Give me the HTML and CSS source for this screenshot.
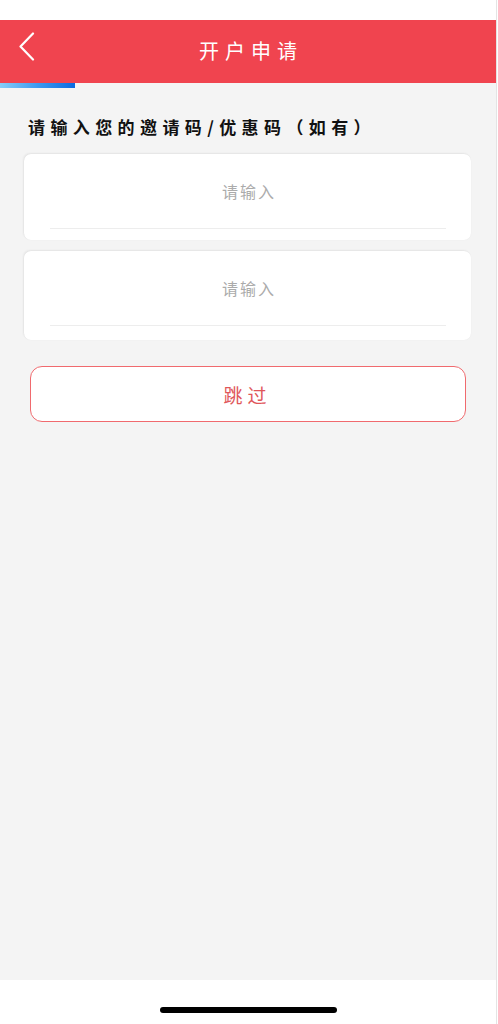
FILE: index.html
```html
<!DOCTYPE html>
<html lang="zh-CN">
<head>
<meta charset="utf-8">
<title>开户申请</title>
<link rel="stylesheet" href="styles.css">
</head>
<body>
<div class="page">
  <div class="status"></div>
  <header class="header">
    <a class="back" href="#" aria-label="返回">
      <svg width="17" height="29" viewBox="0 0 17 29"><path d="M15 1.5 L2.5 14.5 L15 27.5" fill="none" stroke="#fff" stroke-width="2.2" stroke-linecap="round" stroke-linejoin="round"/></svg>
    </a>
    <h1 class="title">开户申请</h1>
    <span></span>
  </header>
  <main class="content">
    <div class="progress"></div>
    <p class="label">请输入您的邀请码/优惠码（如有）</p>
    <div class="card">
      <div class="field">请输入</div>
    </div>
    <div class="card card-tall">
      <div class="field">请输入</div>
    </div>
    <button class="skip" type="button">跳过</button>
  </main>
  <footer class="footer"><span class="home"></span></footer>
</div>
</body>
</html>
```

FILE: styles.css
```css
* { box-sizing: border-box; }
html, body { margin: 0; padding: 0; }
body {
  width: 498px;
  height: 1024px;
  background: #ffffff;
  font-family: "Noto Sans CJK SC", "Noto Sans", "Liberation Sans", sans-serif;
  overflow: hidden;
}
.page {
  width: 497px;
  height: 1024px;
  display: flex;
  flex-direction: column;
  border-right: 1px solid #e4e4e4;
}
.status { height: 20px; background: #fff; flex: none; }
.header {
  height: 63px;
  flex: none;
  background: #f0444f;
  display: grid;
  grid-template-columns: 60px 1fr 60px;
  align-items: center;
}
.back {
  display: block;
  align-self: start;
  padding: 12px 0 0 18px;
  line-height: 0;
}
.title {
  margin: 0;
  text-align: center;
  color: #fff;
  font-size: 20px;
  font-weight: 400;
  letter-spacing: 6px;
  padding-left: 6px;
  line-height: 24px;
  margin-top: -2px;
}
.content {
  flex: 1;
  background: #f4f4f4;
  display: flex;
  flex-direction: column;
}
.progress {
  width: 75px;
  height: 5px;
  flex: none;
  background: linear-gradient(90deg, #86cdf7 0%, #3d9af0 50%, #0b6ae0 100%);
}
.label {
  margin: 27px 0 0 28px;
  font-size: 17px;
  line-height: 24px;
  font-weight: 700;
  letter-spacing: 5.4px;
  color: #111;
  text-spacing-trim: space-all;
  white-space: nowrap;
}
.card {
  margin: 15px 25px 0 24px;
  background: #fff;
  border-radius: 7px;
  box-shadow: -1px -1px 2px rgba(0,0,0,0.06), 0 0 1px rgba(0,0,0,0.08);
  padding: 0 25px 11px 26px;
}
.card-tall { margin-top: 11px; padding-bottom: 14px; }
.field {
  height: 75px;
  padding-bottom: 1px;
  border-bottom: 1px solid #ededed;
  display: flex;
  align-items: center;
  justify-content: center;
  color: #ababab;
  font-size: 16px;
  letter-spacing: 2px;
  padding-left: 2px;
}
.skip {
  margin: 26px 0 0 30px;
  width: 436px;
  height: 56px;
  flex: none;
  background: #fff;
  border: 1.5px solid #f06a6e;
  border-radius: 12px;
  color: #e0565a;
  font-family: inherit;
  font-size: 19px;
  letter-spacing: 5px;
  padding-left: 5px;
}
.footer {
  height: 44px;
  flex: none;
  background: #fff;
  display: flex;
  justify-content: center;
  padding-top: 27px;
}
.home {
  width: 177px;
  height: 6px;
  border-radius: 3px;
  background: #000;
}
```
